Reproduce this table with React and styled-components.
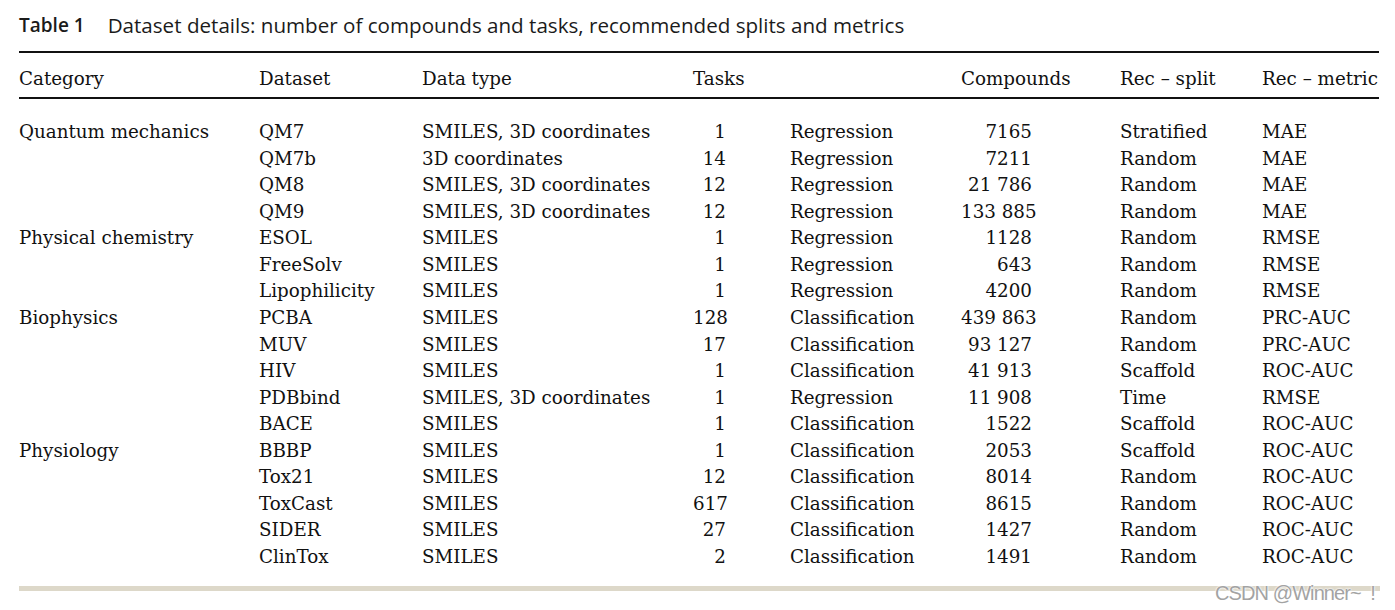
import React from "react";
import styled, { createGlobalStyle } from "styled-components";

const Global = createGlobalStyle`
  html, body { margin: 0; padding: 0; background: #fff; }
  body { width: 1395px; height: 610px; overflow: hidden; }
`;

const Page = styled.div`
  position: relative;
  width: 1395px;
  height: 610px;
  padding: 13px 16px 0 19px;
  box-sizing: border-box;
`;

const Caption = styled.div`
  font-family: "Open Sans", "DejaVu Sans", sans-serif;
  font-size: 20.6px;
  line-height: 25px;
  color: #1b1b1b;
  display: flex;
  gap: 23px;
  height: 25px;
`;

const CapLabel = styled.span`
  font-weight: 600;
  font-size: 19px;
`;

const Table = styled.div`
  margin-top: 13px;
  width: 1360px;
  font-family: "DejaVu Serif", "Liberation Serif", serif;
  font-size: 18.3px;
  color: #111;
  border-top: 2px solid #111;
`;

const Row = styled.div`
  display: grid;
  grid-template-columns: 240px 163px 271px 97px 171px 159px 142px 117px;
  align-items: center;
  white-space: nowrap;
`;

const HeadRow = styled(Row)`
  height: 46px;
  padding-top: 7px;
  box-sizing: border-box;
  border-bottom: 2px solid #111;
`;

const Body = styled.div`
  padding: 20px 0 15px;
`;

const DataRow = styled(Row)`
  height: 26.5625px;
  line-height: 26.5625px;
`;

const Cell = styled.div`
  text-align: ${(p) => (p.$right ? "right" : "left")};
  padding-right: ${(p) => p.$pr || 0}px;
`;

const Bar = styled.div`
  height: 5px;
  width: 1361px;
  background: #ddd8c9;
`;

const Watermark = styled.div`
  position: absolute;
  left: 1215px;
  top: 581px;
  font-family: "Liberation Sans", Arial, sans-serif;
  font-size: 20px;
  line-height: 24px;
  letter-spacing: -0.9px;
  white-space: pre;
  color: #a3a3a3;
  text-shadow: 0 0 1px #fff, 0 0 2px #fff, 0 0 2px #fff;
`;

const rows = [
  ["Quantum mechanics", "QM7", "SMILES, 3D coordinates", "1", "Regression", "7165", "Stratified", "MAE"],
  ["", "QM7b", "3D coordinates", "14", "Regression", "7211", "Random", "MAE"],
  ["", "QM8", "SMILES, 3D coordinates", "12", "Regression", "21 786", "Random", "MAE"],
  ["", "QM9", "SMILES, 3D coordinates", "12", "Regression", "133 885", "Random", "MAE"],
  ["Physical chemistry", "ESOL", "SMILES", "1", "Regression", "1128", "Random", "RMSE"],
  ["", "FreeSolv", "SMILES", "1", "Regression", "643", "Random", "RMSE"],
  ["", "Lipophilicity", "SMILES", "1", "Regression", "4200", "Random", "RMSE"],
  ["Biophysics", "PCBA", "SMILES", "128", "Classification", "439 863", "Random", "PRC-AUC"],
  ["", "MUV", "SMILES", "17", "Classification", "93 127", "Random", "PRC-AUC"],
  ["", "HIV", "SMILES", "1", "Classification", "41 913", "Scaffold", "ROC-AUC"],
  ["", "PDBbind", "SMILES, 3D coordinates", "1", "Regression", "11 908", "Time", "RMSE"],
  ["", "BACE", "SMILES", "1", "Classification", "1522", "Scaffold", "ROC-AUC"],
  ["Physiology", "BBBP", "SMILES", "1", "Classification", "2053", "Scaffold", "ROC-AUC"],
  ["", "Tox21", "SMILES", "12", "Classification", "8014", "Random", "ROC-AUC"],
  ["", "ToxCast", "SMILES", "617", "Classification", "8615", "Random", "ROC-AUC"],
  ["", "SIDER", "SMILES", "27", "Classification", "1427", "Random", "ROC-AUC"],
  ["", "ClinTox", "SMILES", "2", "Classification", "1491", "Random", "ROC-AUC"],
];

export default function App() {
  return (
    <>
      <Global />
      <Page>
        <Caption>
          <CapLabel>Table 1</CapLabel>
          <span>Dataset details: number of compounds and tasks, recommended splits and metrics</span>
        </Caption>
        <Table>
          <HeadRow>
            <Cell>Category</Cell>
            <Cell>Dataset</Cell>
            <Cell>Data type</Cell>
            <Cell>Tasks</Cell>
            <Cell />
            <Cell>Compounds</Cell>
            <Cell>Rec – split</Cell>
            <Cell>Rec – metric</Cell>
          </HeadRow>
          <Body>
            {rows.map((r, i) => (
              <DataRow key={i}>
                <Cell>{r[0]}</Cell>
                <Cell>{r[1]}</Cell>
                <Cell>{r[2]}</Cell>
                <Cell $right $pr={64}>{r[3]}</Cell>
                <Cell>{r[4]}</Cell>
                <Cell $right $pr={88}>{r[5]}</Cell>
                <Cell>{r[6]}</Cell>
                <Cell>{r[7]}</Cell>
              </DataRow>
            ))}
          </Body>
          <Bar />
        </Table>
        <Watermark>{"CSDN @Winner~  !"}</Watermark>
      </Page>
    </>
  );
}
